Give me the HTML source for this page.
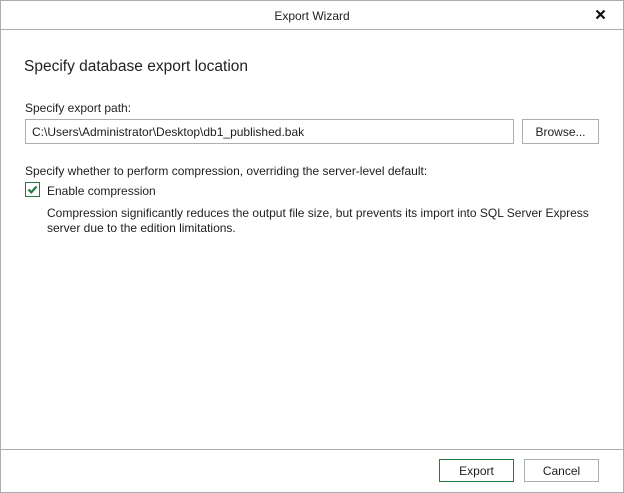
<!DOCTYPE html>
<html><head><style>
*{margin:0;padding:0;box-sizing:border-box}
body{width:624px;height:493px;background:#fff;font-family:"Liberation Sans",sans-serif;color:#1e1e1e;position:relative;overflow:hidden}
.frame{position:absolute;left:0;top:0;width:624px;height:493px;border:1px solid #a9aeb3}
.abs{position:absolute;white-space:nowrap}
.t{font-size:12px}
.btn{position:absolute;border:1px solid #a9aeb3;background:#fff;font-size:12px;text-align:center}
</style></head><body>
<div class="frame"></div>
<div class="abs" style="left:0;top:29px;width:624px;height:1px;background:#a9aeb3"></div>
<div class="abs t" style="left:0;width:624px;text-align:center;top:9px">Export Wizard</div>
<svg class="abs" style="left:595px;top:9px" width="11" height="11" viewBox="0 0 11 11"><path d="M1.5 1.5L9.5 9.5M9.5 1.5L1.5 9.5" stroke="#111" stroke-width="2.2"/></svg>
<div class="abs" style="left:24px;top:58px;font-size:15.5px;color:#222">Specify database export location</div>
<div class="abs t" style="left:25px;top:101px">Specify export path:</div>
<div class="abs" style="left:25px;top:119px;width:489px;height:25px;border:1px solid #a9aeb3"></div>
<div class="abs t" style="left:32px;top:125px">C:\Users\Administrator\Desktop\db1_published.bak</div>
<div class="btn" style="left:522px;top:119px;width:77px;height:25px;line-height:24px">Browse...</div>
<div class="abs t" style="left:25px;top:164px">Specify whether to perform compression, overriding the server-level default:</div>
<div class="abs" style="left:25px;top:182px;width:15px;height:15px;border:1px solid #217a3f"></div>
<svg class="abs" style="left:25px;top:182px" width="15" height="15" viewBox="0 0 15 15"><path d="M3.5 7.5L6.3 10.3L11.5 4.5" stroke="#217a3f" stroke-width="2.2" fill="none"/></svg>
<div class="abs t" style="left:47px;top:184px">Enable compression</div>
<div class="abs t" style="left:47px;top:206px">Compression significantly reduces the output file size, but prevents its import into SQL Server Express</div>
<div class="abs t" style="left:47px;top:221px">server due to the edition limitations.</div>
<div class="abs" style="left:0;top:449px;width:624px;height:1px;background:#a9aeb3"></div>
<div class="btn" style="left:439px;top:459px;width:75px;height:23px;line-height:23px;border-color:#217a3f">Export</div>
<div class="btn" style="left:524px;top:459px;width:75px;height:23px;line-height:23px">Cancel</div>
</body></html>
